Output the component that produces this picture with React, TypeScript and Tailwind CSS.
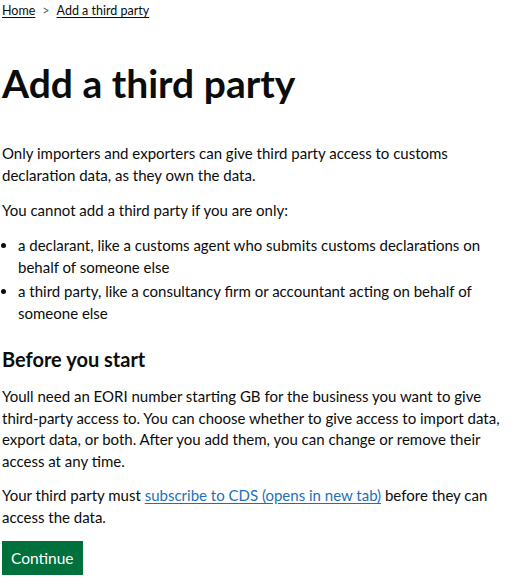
import React from "react";

export default function App() {
  return (
    <div className="bg-white text-[#0b0c0c] px-[2px] pt-[2px] max-w-[506px]" style={{ fontFamily: 'Lato, Arial, sans-serif' }}>
      <nav className="flex items-center text-[12.5px] leading-[18px]">
        <a href="#" className="underline underline-offset-2 text-[#0b0c0c]">Home</a>
        <span className="mx-[7px] text-[#505a5f]">&gt;</span>
        <a href="#" className="underline underline-offset-2 text-[#0b0c0c]">Add a third party</a>
      </nav>
      <h1 className="mt-[41px] text-[39px] leading-[44px] font-bold">Add a third party</h1>
      <p className="mt-[37px] text-[15px] leading-[22px]">
        Only importers and exporters can give third party access to customs declaration data, as they own the data.
      </p>
      <p className="mt-[13px] text-[15px] leading-[22px]">You cannot add a third party if you are only:</p>
      <ul className="mt-[13px] text-[15px] leading-[22px] list-disc pl-[16px]">
        <li>a declarant, like a customs agent who submits customs declarations on behalf of someone else</li>
        <li className="mt-[2px]">a third party, like a consultancy firm or accountant acting on behalf of someone else</li>
      </ul>
      <h2 className="mt-[22px] text-[20px] leading-[26px] font-bold">Before you start</h2>
      <p className="mt-[14px] text-[15px] leading-[21.5px]">
        Youll need an EORI number starting GB for the business you want to give third-party access to. You can choose whether to give access to import data, export data, or both. After you add them, you can change or remove their access at any time.
      </p>
      <p className="mt-[13px] text-[15px] leading-[21.5px]">
        Your third party must{" "}
        <a href="#" className="underline underline-offset-2 text-[#1d70b8]">subscribe to CDS (opens in new tab)</a>{" "}
        before they can access the data.
      </p>
      <button className="mt-[13px] bg-[#00703c] text-white text-[15.5px] leading-[20px] px-[9px] py-[7px] shadow-[0_2px_0_#002d18]">
        Continue
      </button>
    </div>
  );
}
